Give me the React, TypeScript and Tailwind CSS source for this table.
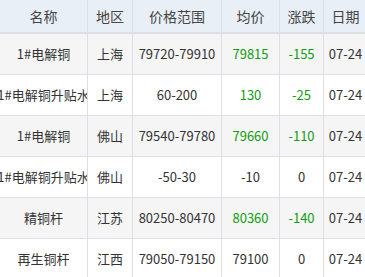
const rows = [
  { name: "1#电解铜", area: "上海", range: "79720-79910", avg: "79815", diff: "-155", date: "07-24", green: true },
  { name: "1#电解铜升贴水", area: "上海", range: "60-200", avg: "130", diff: "-25", date: "07-24", green: true },
  { name: "1#电解铜", area: "佛山", range: "79540-79780", avg: "79660", diff: "-110", date: "07-24", green: true },
  { name: "1#电解铜升贴水", area: "佛山", range: "-50-30", avg: "-10", diff: "0", date: "07-24", green: false },
  { name: "精铜杆", area: "江苏", range: "80250-80470", avg: "80360", diff: "-140", date: "07-24", green: true },
  { name: "再生铜杆", area: "江西", range: "79050-79150", avg: "79100", diff: "0", date: "07-24", green: false },
];

const headers = ["名称", "地区", "价格范围", "均价", "涨跌", "日期"];

function Cell({ children, className = "" }: { children: React.ReactNode; className?: string }) {
  return (
    <div
      className={`flex items-center justify-center overflow-hidden whitespace-nowrap border-r border-b border-[#dcdfe6] ${className}`}
    >
      {children}
    </div>
  );
}

export default function App() {
  return (
    <div
      className="w-[365px] h-[277px] overflow-hidden bg-white text-[#333] text-[13px]"
      style={{ fontFamily: '"Microsoft YaHei", "Noto Sans CJK SC", sans-serif' }}
    >
      <div className="grid w-[368px] grid-cols-[88px_45px_89px_58px_44px_44px]">
        {headers.map((h) => (
          <Cell key={h} className="h-[34px] bg-[#e9eff6] text-[14px] text-[#444] border-b-2">
            {h}
          </Cell>
        ))}
        {rows.map((r, i) => {
          const bg = i % 2 === 0 ? "bg-[#f5f5f5]" : "bg-white";
          const tone = r.green ? "text-[#109d10]" : "";
          return [
            <Cell key={`n${i}`} className={`h-[41px] ${bg}`}>{r.name}</Cell>,
            <Cell key={`a${i}`} className={`h-[41px] ${bg}`}>{r.area}</Cell>,
            <Cell key={`r${i}`} className={`h-[41px] ${bg}`}>{r.range}</Cell>,
            <Cell key={`v${i}`} className={`h-[41px] ${bg} ${tone}`}>{r.avg}</Cell>,
            <Cell key={`d${i}`} className={`h-[41px] ${bg} ${tone}`}>{r.diff}</Cell>,
            <Cell key={`t${i}`} className={`h-[41px] ${bg}`}>{r.date}</Cell>,
          ];
        })}
      </div>
    </div>
  );
}
